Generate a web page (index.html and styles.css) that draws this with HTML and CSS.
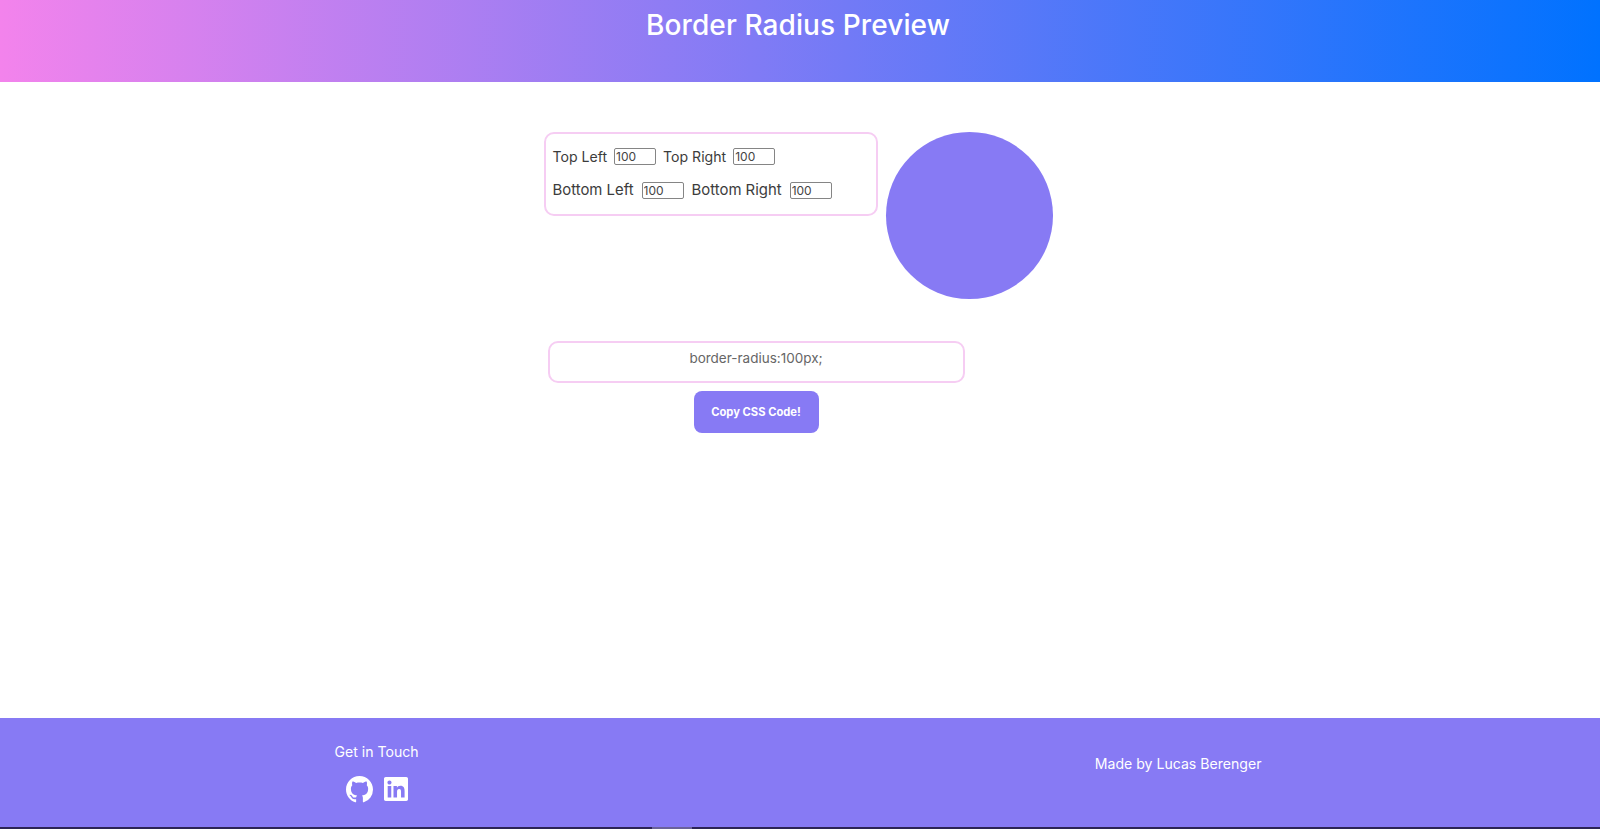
FILE: index.html
```html
<!DOCTYPE html>
<html lang="en">
<head>
    <meta charset="UTF-8">
    <meta name="viewport" content="width=device-width, initial-scale=1.0">
    <title>Border Radius Preview</title>
    <link rel="stylesheet" href="styles.css">
</head>
<body>
    <header class="header">
        <h1>Border Radius Preview</h1>
    </header>

    <main class="main">
        <div class="content">
            <div class="preview-row">
                <div class="controls">
                    <div class="control-row">
                        <label for="top-left">Top Left</label>
                        <input type="text" id="top-left" value="100">
                        <label for="top-right">Top Right</label>
                        <input type="text" id="top-right" value="100">
                    </div>
                    <div class="control-row">
                        <label for="bottom-left">Bottom Left</label>
                        <input type="text" id="bottom-left" value="100">
                        <label for="bottom-right">Bottom Right</label>
                        <input type="text" id="bottom-right" value="100">
                    </div>
                </div>
                <div class="shape"></div>
            </div>

            <div class="output">
                <div class="code">border-radius:100px;</div>
                <button class="copy">Copy CSS Code!</button>
            </div>
        </div>
    </main>

    <footer class="footer">
        <div class="contact">
            <p>Get in Touch</p>
            <div class="socials">
                <svg class="github" viewBox="0 0 16 16" fill="currentColor"><path d="M8 0C3.58 0 0 3.58 0 8c0 3.54 2.29 6.53 5.47 7.59.4.07.55-.17.55-.38 0-.19-.01-.82-.01-1.49-2.01.37-2.53-.49-2.69-.94-.09-.23-.48-.94-.82-1.13-.28-.15-.68-.52-.01-.53.63-.01 1.08.58 1.23.82.72 1.21 1.87.87 2.33.66.07-.52.28-.87.51-1.07-1.78-.2-3.64-.89-3.64-3.95 0-.87.31-1.59.82-2.15-.08-.2-.36-1.02.08-2.12 0 0 .67-.21 2.2.82.64-.18 1.32-.27 2-.27.68 0 1.36.09 2 .27 1.53-1.04 2.2-.82 2.2-.82.44 1.1.16 1.92.08 2.12.51.56.82 1.27.82 2.15 0 3.07-1.87 3.75-3.65 3.95.29.25.54.73.54 1.48 0 1.07-.01 1.93-.01 2.2 0 .21.15.46.55.38A8.013 8.013 0 0016 8c0-4.42-3.58-8-8-8z"/></svg>
                <svg class="linkedin" viewBox="0 32 448 448" fill="currentColor"><path d="M416 32H31.9C14.3 32 0 46.5 0 64.3v383.4C0 465.5 14.3 480 31.9 480H416c17.6 0 32-14.5 32-32.3V64.3c0-17.8-14.4-32.3-32-32.3zM135.4 416H69V202.2h66.5V416zm-33.2-243c-21.3 0-38.5-17.3-38.5-38.5S80.9 96 102.2 96c21.2 0 38.5 17.3 38.5 38.5 0 21.3-17.2 38.5-38.5 38.5zm282.1 243h-66.4V312c0-24.8-.5-56.7-34.5-56.7-34.6 0-39.9 27-39.9 54.9V416h-66.4V202.2h63.7v29.2h.9c8.9-16.8 30.6-34.5 62.9-34.5 67.2 0 79.7 44.3 79.7 101.9V416z"/></svg>
            </div>
        </div>
        <p class="credit">Made by Lucas Berenger</p>
    </footer>
    <div class="edge"><span class="edge-thumb"></span></div>
</body>
</html>
```

FILE: styles.css
```css
* {
    margin: 0;
    padding: 0;
    box-sizing: border-box;
}

body {
    display: flex;
    flex-direction: column;
    height: 100vh;
    overflow: hidden;
    background-color: #fff;
    color: #3c3c3c;
    font-family: Inter, "Open Sans", sans-serif;
}

.header {
    height: 82px;
    flex-shrink: 0;
    text-align: center;
    color: #fff;
    background: linear-gradient(to right, #f383ec, #0072ff);
}

.header h1 {
    padding-right: 4px;
    font-size: 28px;
    font-weight: 500;
    letter-spacing: 0.1px;
    line-height: 50px;
}

.main {
    flex: 1;
    display: flex;
    justify-content: center;
    padding-top: 50px;
    padding-right: 4px;
}

.content {
    width: 509px;
}

.preview-row {
    display: flex;
    align-items: flex-start;
    gap: 8px;
}

.controls {
    width: 334px;
    height: 84px;
    padding: 6px 7px;
    border: 2px solid #f6cdf3;
    border-radius: 10px;
}

.control-row {
    display: flex;
    align-items: center;
    height: 33.5px;
    gap: 7px;
    font-size: 14.1px;
}

.control-row + .control-row {
    gap: 8px;
    font-size: 14.9px;
}

.control-row input {
    width: 42px;
    height: 17px;
    padding: 0 1px;
    border: 1px solid #858585;
    border-radius: 2px;
    color: #444;
    font-family: inherit;
    font-size: 12px;
}

.shape {
    width: 167px;
    height: 167px;
    border-radius: 100px;
    background-color: #877af4;
}

.output {
    display: flex;
    flex-direction: column;
    align-items: center;
    gap: 8px;
    width: 417px;
    margin: 42px 0 0 4px;
}

.code {
    width: 100%;
    height: 42px;
    padding-top: 7px;
    border: 2px solid #f6cdf3;
    border-radius: 10px;
    text-align: center;
    font-size: 13.5px;
    color: #666;
}

.copy {
    width: 125px;
    height: 42px;
    border: none;
    border-radius: 8px;
    background-color: #877af4;
    color: #fff;
    font-family: inherit;
    font-size: 11.2px;
    font-weight: 700;
}

.footer {
    height: 109px;
    flex-shrink: 0;
    display: flex;
    justify-content: space-around;
    align-items: center;
    padding-right: 4px;
    color: #fff;
    background-color: #877af4;
    font-size: 14.1px;
}

.contact {
    padding-right: 7px;
    text-align: center;
}

.socials {
    display: flex;
    justify-content: center;
    align-items: center;
    gap: 11px;
    margin-top: 16px;
}

.github {
    width: 27px;
    height: 27px;
}

.linkedin {
    width: 24px;
    height: 24px;
}

.credit {
    margin-bottom: 18px;
}

.edge {
    height: 2px;
    flex-shrink: 0;
    padding-left: 652px;
    background-color: #2c2456;
}

.edge-thumb {
    display: block;
    width: 40px;
    height: 2px;
    background-color: #6a629a;
}
```
